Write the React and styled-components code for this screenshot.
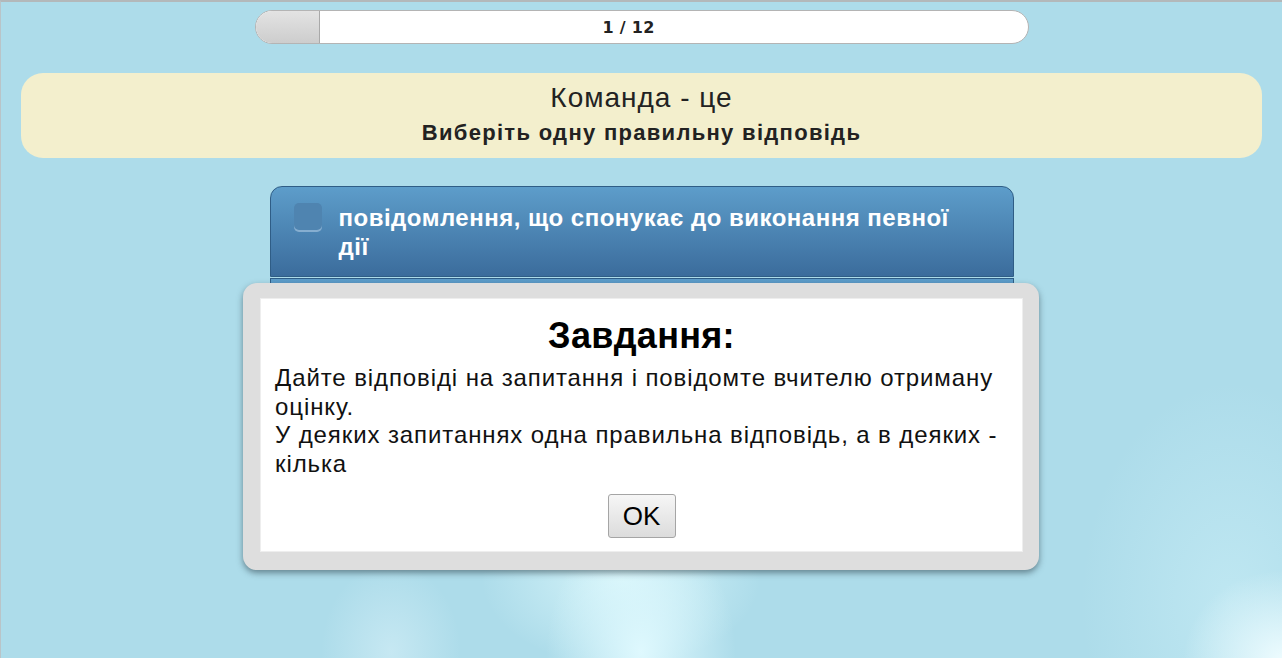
import React from "react";
import styled, { createGlobalStyle } from "styled-components";

const Global = createGlobalStyle`
  html, body { margin: 0; padding: 0; }
  body { font-family: "Liberation Sans", Arial, sans-serif; }
`;

const Page = styled.div`
  position: relative;
  width: 1282px;
  height: 658px;
  box-sizing: border-box;
  overflow: hidden;
  border-top: 2px solid #b3b8ba;
  border-left: 1px solid #b9c4c8;
  background-color: #addcea;
  background-image:
    radial-gradient(ellipse 95px 130px at 640px 650px, rgba(225, 250, 255, 0.95), rgba(225, 250, 255, 0) 100%),
    radial-gradient(ellipse 140px 90px at 620px 575px, rgba(220, 248, 252, 0.85), rgba(220, 248, 252, 0) 100%),
    radial-gradient(ellipse 100px 90px at 1282px 658px, rgba(238, 252, 255, 1), rgba(238, 252, 255, 0) 100%),
    radial-gradient(ellipse 70px 90px at 390px 650px, rgba(215, 240, 248, 0.6), rgba(215, 240, 248, 0) 100%),
    radial-gradient(ellipse 150px 220px at 1230px 600px, rgba(205, 240, 248, 0.55), rgba(205, 240, 248, 0) 100%);
  display: flex;
  flex-direction: column;
  align-items: center;
  padding-top: 8px;
`;

const Progress = styled.div`
  position: relative;
  width: 774px;
  height: 34px;
  box-sizing: border-box;
  border: 1px solid #b4b4b4;
  border-radius: 17px;
  background: #ffffff;
  overflow: hidden;
  display: flex;
  align-items: center;
  justify-content: center;
`;

const ProgressFill = styled.div`
  position: absolute;
  left: 0;
  top: 0;
  bottom: 0;
  box-sizing: border-box;
  border-right: 1px solid #a9a9a9;
  background: linear-gradient(#e3e3e3, #cdcdcd);
`;

const ProgressLabel = styled.span`
  position: relative;
  padding-right: 26px;
  font-family: "DejaVu Sans", Verdana, sans-serif;
  font-weight: bold;
  font-size: 16px;
  letter-spacing: 0.3px;
  color: #222;
`;

const QuestionCard = styled.div`
  margin-top: 29px;
  width: 1241px;
  height: 85px;
  box-sizing: border-box;
  border-radius: 22px;
  background: #f3efcd;
  display: flex;
  flex-direction: column;
  align-items: center;
  padding-top: 9px;
  color: #222;
`;

const QuestionTitle = styled.div`
  font-size: 28px;
  letter-spacing: 1px;
  line-height: 32px;
`;

const QuestionHint = styled.div`
  margin-top: 5px;
  font-size: 22px;
  letter-spacing: 1.3px;
  font-weight: bold;
  line-height: 28px;
`;

const Options = styled.div`
  margin-top: 28px;
  width: 744px;
  display: flex;
  flex-direction: column;
  gap: 1px;
`;

const Option = styled.div`
  box-sizing: border-box;
  min-height: ${(p) => p.$h}px;
  border: 1px solid #2f5d86;
  border-radius: ${(p) => (p.$first ? "12px 12px 0 0" : "0")};
  background: linear-gradient(#5d9dca, #3b6c9c);
  display: flex;
  align-items: flex-start;
  gap: 17px;
  padding: 16px 50px 0 23px;
`;

const Check = styled.div`
  flex: none;
  width: 28px;
  height: 29px;
  box-sizing: border-box;
  border-radius: 5px;
  background: #4f84b0;
  box-shadow: inset 0 -2px 0 rgba(180, 210, 235, 0.55);
`;

const OptionText = styled.div`
  color: #ffffff;
  font-size: 24px;
  letter-spacing: 0.5px;
  font-weight: bold;
  line-height: 29px;
`;

const Modal = styled.div`
  position: absolute;
  left: 242px;
  top: 281px;
  width: 796px;
  box-sizing: border-box;
  padding: 15px 16px 18px 17px;
  background: #dedede;
  border-radius: 14px;
  box-shadow: 0 3px 6px rgba(40, 60, 70, 0.55);
`;

const ModalInner = styled.div`
  background: #ffffff;
  border: 1px solid #eeeeee;
  height: 254px;
  box-sizing: border-box;
  padding: 17px 14px 0 14px;
  display: flex;
  flex-direction: column;
`;

const ModalTitle = styled.div`
  text-align: center;
  font-size: 36px;
  letter-spacing: 0.3px;
  font-weight: bold;
  line-height: 40px;
  color: #000;
`;

const ModalText = styled.div`
  margin-top: 8px;
  font-size: 24px;
  letter-spacing: 0.9px;
  line-height: 28.5px;
  color: #111;
`;

const OkButton = styled.button`
  align-self: center;
  margin-top: 16px;
  width: 68px;
  height: 44px;
  font-family: "Liberation Sans", Arial, sans-serif;
  font-size: 26px;
  color: #000;
  background: linear-gradient(#f6f6f6, #dcdcdc);
  border: 1px solid #a5a5a5;
  border-radius: 3px;
  padding: 0;
`;

export default function App() {
  return (
    <>
      <Global />
      <Page>
        <Progress>
          <ProgressFill style={{ width: `${(1 / 12) * 100}%` }} />
          <ProgressLabel>1 / 12</ProgressLabel>
        </Progress>
        <QuestionCard>
          <QuestionTitle>Команда - це</QuestionTitle>
          <QuestionHint>Виберіть одну правильну відповідь</QuestionHint>
        </QuestionCard>
        <Options>
          <Option $h={91} $first>
            <Check />
            <OptionText>повідомлення, що спонукає до виконання певної дії</OptionText>
          </Option>
          <Option $h={91}>
            <Check />
            <OptionText>група людей</OptionText>
          </Option>
        </Options>
        <Modal>
          <ModalInner>
            <ModalTitle>Завдання:</ModalTitle>
            <ModalText>
              Дайте відповіді на запитання і повідомте вчителю отриману оцінку.
              <br />
              У деяких запитаннях одна правильна відповідь, а в деяких - кілька
            </ModalText>
            <OkButton>OK</OkButton>
          </ModalInner>
        </Modal>
      </Page>
    </>
  );
}
